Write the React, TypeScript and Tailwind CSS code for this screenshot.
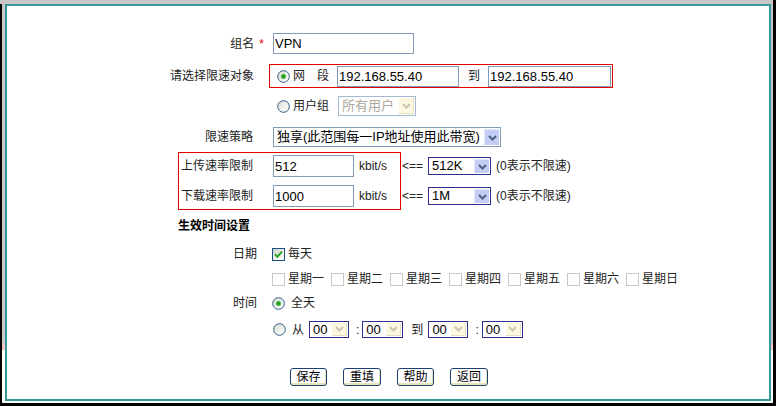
import React from "react";

function Radio({ checked = false }: { checked?: boolean }) {
  return (
    <svg width="13" height="13" viewBox="0 0 13 13" className="block shrink-0">
      <defs>
        <linearGradient id="rbg" x1="0" y1="0" x2="1" y2="1">
          <stop offset="0" stopColor="#d6d6cf" />
          <stop offset="0.6" stopColor="#f4f4f2" />
          <stop offset="1" stopColor="#ffffff" />
        </linearGradient>
      </defs>
      <circle cx="6.5" cy="6.5" r="5.8" fill="url(#rbg)" stroke="#2f5f86" strokeWidth="1" />
      {checked && (
        <>
          <circle cx="6.5" cy="6.5" r="2.7" fill="#62c462" />
          <circle cx="6.5" cy="6.5" r="1.7" fill="#1f9a1f" />
        </>
      )}
    </svg>
  );
}

function Check({ checked = false, disabled = false }: { checked?: boolean; disabled?: boolean }) {
  return (
    <svg width="13" height="13" viewBox="0 0 13 13" className="block shrink-0">
      <defs>
        <linearGradient id="cbg" x1="0" y1="0" x2="1" y2="1">
          <stop offset="0" stopColor="#c8c8c2" />
          <stop offset="0.55" stopColor="#f0f0ec" />
          <stop offset="1" stopColor="#ffffff" />
        </linearGradient>
      </defs>
      <rect
        x="0.5"
        y="0.5"
        width="12"
        height="12"
        fill={checked ? "url(#cbg)" : "#ffffff"}
        stroke={disabled ? "#c8c8c8" : "#1c5180"}
      />
      {checked && <path d="M3 6.2 L5.3 8.8 L10 3.6" fill="none" stroke="#21a121" strokeWidth="2" />}
    </svg>
  );
}

function Chevron({ color }: { color: string }) {
  return (
    <svg width="9" height="6" viewBox="0 0 9 6" className="block">
      <path d="M1 1 L4.5 4.5 L8 1" stroke={color} strokeWidth="2" fill="none" />
    </svg>
  );
}

function Sel({
  cls,
  text,
  pale = false,
  grayText = false,
}: {
  cls: string;
  text: string;
  pale?: boolean;
  grayText?: boolean;
}) {
  return (
    <div className={`flex items-stretch border bg-white shrink-0 ${cls}`}>
      <div
        className={`flex-1 flex items-center pl-[3px] text-[13px] whitespace-nowrap overflow-hidden ${
          grayText ? "text-[#aca899]" : "text-black"
        }`}
      >
        {text}
      </div>
      <div className="p-[1px] flex">
        <div
          className={`w-[15px] flex items-center justify-center ${
            pale
              ? "bg-[#fbf8df] border-r border-b border-[#e4e0c4]"
              : "bg-[#c3cdf6] border-l border-t border-[#e2e8fc]"
          }`}
        >
          <Chevron color={pale ? "#c9c6b6" : "#4d6185"} />
        </div>
      </div>
    </div>
  );
}

function Field({ cls, value }: { cls: string; value: string }) {
  return (
    <input
      readOnly
      value={value}
      className={`border border-[#7f9db9] px-[1px] text-[13px] text-black bg-white outline-none shrink-0 ${cls}`}
    />
  );
}

function Btn({ children, cls }: { children: React.ReactNode; cls: string }) {
  return (
    <button
      className={`h-[18px] ${cls} border border-[#1d3f6e] rounded-[3px] bg-white shadow-[inset_-1px_-2px_0_#e9e2b6] text-[12px] leading-none flex items-center justify-center text-black`}
    >
      {children}
    </button>
  );
}

function SideStrip({ w }: { w: string }) {
  return (
    <div className={`${w} flex flex-col`}>
      <div className="h-[339px] bg-[#c8c8c8]" />
      <div className="h-[7px] bg-[#f6c4c4]" />
      <div className="flex-1 bg-white" />
    </div>
  );
}

export default function App() {
  const days = ["星期一", "星期二", "星期三", "星期四", "星期五", "星期六", "星期日"];
  return (
    <div className="w-[776px] h-[406px] bg-black flex flex-col font-['Liberation_Sans','Noto_Sans_CJK_SC',sans-serif] text-[#222] overflow-hidden">
      <div className="h-[4px] bg-[#c8c8c8] mr-[3px]" />
      <div className="flex h-[399px]">
        <div className="w-[2px] bg-black" />
        <SideStrip w="w-[3px]" />
        <div className="w-[766px] flex flex-col">
          <div className="h-[397px] border-2 border-[#339999] bg-white">
            <div className="pl-[158px] pt-[27px] flex flex-col">
              {/* 组名 */}
              <div className="flex items-center h-[21px]">
                <div className="w-[108px] pr-[9px] text-right text-[12px]">
                  组名<span className="ml-[5px] text-[#e00000]">*</span>
                </div>
                <Field cls="w-[141px] h-[21px]" value="VPN" />
              </div>

              {/* 请选择限速对象 */}
              <div className="flex items-center h-[24px] mt-[10px]">
                <div className="w-[104px] pr-[15px] text-right text-[12px] whitespace-nowrap">请选择限速对象</div>
                <div className="w-[344px] h-[24px] border border-[#e00000] flex items-center pl-[7px]">
                  <Radio checked />
                  <span className="ml-[3px] text-[12px]">网</span>
                  <span className="ml-[12px] text-[12px]">段</span>
                  <Field cls="ml-[8px] w-[122px] h-[21px]" value="192.168.55.40" />
                  <span className="ml-[9px] text-[12px]">到</span>
                  <Field cls="ml-[8px] w-[123px] h-[21px]" value="192.168.55.40" />
                </div>
              </div>

              {/* 用户组 */}
              <div className="flex items-center h-[20px] mt-[8px] pl-[112px]">
                <Radio />
                <span className="ml-[3px] text-[12px]">用户组</span>
                <Sel cls="ml-[9px] w-[78px] h-[20px] border-[#a5b9cf]" text="所有用户" pale grayText />
              </div>

              {/* 限速策略 */}
              <div className="flex items-center h-[20px] mt-[11px]">
                <div className="w-[108px] pr-[20px] text-right text-[12px]">限速策略</div>
                <Sel cls="w-[228px] h-[20px] border-[#7f9db9]" text="独享(此范围每一IP地址使用此带宽)" />
              </div>

              {/* 速率限制 */}
              <div className="flex mt-[5px] ml-[13px]">
                <div className="w-[223px] h-[58px] border border-[#e00000] flex flex-col pl-[2px] pt-[2px] gap-[8px]">
                  {[
                    ["上传速率限制", "512"],
                    ["下载速率限制", "1000"],
                  ].map(([l, v]) => (
                    <div key={l} className="flex items-center h-[22px]">
                      <div className="w-[92px] text-[12px]">{l}</div>
                      <Field cls="w-[81px] h-[22px]" value={v} />
                      <span className="ml-[5px] text-[12px]">kbit/s</span>
                    </div>
                  ))}
                </div>
                <div className="flex flex-col pt-[3px] gap-[8px] ml-[1px]">
                  {["512K", "1M"].map((v) => (
                    <div key={v} className="flex items-center h-[22px]">
                      <span className="text-[12px]">&lt;==</span>
                      <Sel cls="ml-[5px] w-[63px] h-[18px] border-[#2e3192]" text={v} />
                      <span className="ml-[5px] text-[12px]">(0表示不限速)</span>
                    </div>
                  ))}
                </div>
              </div>

              {/* 生效时间设置 */}
              <div className="mt-[9px] ml-[13px] h-[14px] flex items-center text-[12px] font-bold text-black">
                生效时间设置
              </div>

              {/* 日期 */}
              <div className="flex items-center h-[14px] mt-[14px]">
                <div className="w-[107px] pr-[15px] text-right text-[12px]">日期</div>
                <Check checked />
                <span className="ml-[3px] text-[12px]">每天</span>
              </div>

              {/* weekdays */}
              <div className="flex items-center h-[14px] mt-[11px] pl-[107px] gap-[7px]">
                {days.map((d) => (
                  <div key={d} className="flex items-center">
                    <Check disabled />
                    <span className="ml-[3px] text-[12px]">{d}</span>
                  </div>
                ))}
              </div>

              {/* 时间 */}
              <div className="flex items-center h-[14px] mt-[10px]">
                <div className="w-[107px] pr-[15px] text-right text-[12px]">时间</div>
                <Radio checked />
                <span className="ml-[6px] text-[12px]">全天</span>
              </div>

              <div className="flex items-center h-[17px] mt-[11px] pl-[108px]">
                <Radio />
                <span className="ml-[6px] text-[12px]">从</span>
                <Sel cls="ml-[5px] w-[40px] h-[17px] border-[#2e3192]" text="00" pale />
                <span className="ml-[7px] text-[12px]">:</span>
                <Sel cls="ml-[3px] w-[41px] h-[17px] border-[#2e3192]" text="00" pale />
                <span className="ml-[8px] text-[12px]">到</span>
                <Sel cls="ml-[5px] w-[40px] h-[17px] border-[#2e3192]" text="00" pale />
                <span className="ml-[7px] text-[12px]">:</span>
                <Sel cls="ml-[3px] w-[41px] h-[17px] border-[#2e3192]" text="00" pale />
              </div>

              {/* buttons */}
              <div className="flex items-center mt-[30px] pl-[125px] gap-[16px]">
                <Btn cls="w-[37px]">保存</Btn>
                <Btn cls="w-[38px]">重填</Btn>
                <Btn cls="w-[37px]">帮助</Btn>
                <Btn cls="w-[38px]">返回</Btn>
              </div>
            </div>
          </div>
          <div className="h-[2px] bg-white" />
        </div>
        <SideStrip w="w-[2px]" />
      </div>
    </div>
  );
}
